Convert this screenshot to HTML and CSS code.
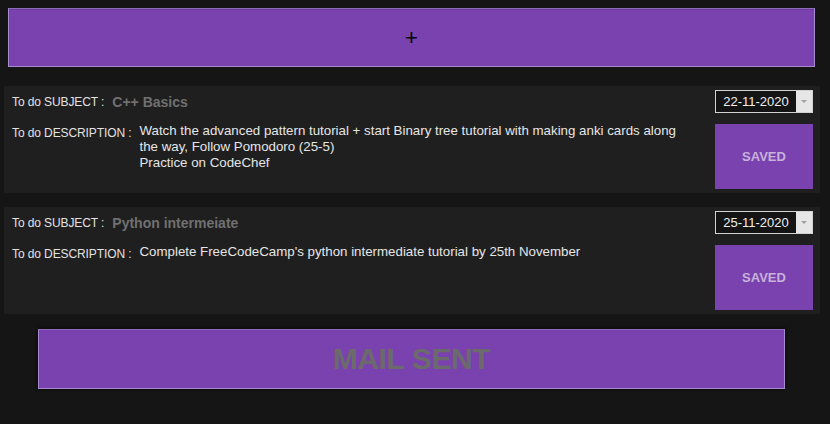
FILE: index.html
```html
<!DOCTYPE html>
<html>
<head>
<meta charset="utf-8">
<link rel="stylesheet" href="styles.css">
</head>
<body>
<main class="page">
  <button class="add-btn">+</button>

  <section class="todo">
    <div class="todo-main">
      <div class="row subject-row">
        <span class="label">To do SUBJECT :</span>
        <span class="subject">C++ Basics</span>
      </div>
      <div class="row desc-row">
        <span class="label">To do DESCRIPTION :</span>
        <p class="desc">Watch the advanced pattern tutorial + start Binary tree tutorial with making anki cards along the way, Follow Pomodoro (25-5)<br>Practice on CodeChef</p>
      </div>
    </div>
    <div class="todo-side">
      <div class="date"><span class="date-text">22-11-2020</span><span class="date-arrow"></span></div>
      <button class="saved">SAVED</button>
    </div>
  </section>

  <section class="todo">
    <div class="todo-main">
      <div class="row subject-row">
        <span class="label">To do SUBJECT :</span>
        <span class="subject">Python intermeiate</span>
      </div>
      <div class="row desc-row">
        <span class="label">To do DESCRIPTION :</span>
        <p class="desc">Complete FreeCodeCamp's python intermediate tutorial by 25th November</p>
      </div>
    </div>
    <div class="todo-side">
      <div class="date"><span class="date-text">25-11-2020</span><span class="date-arrow"></span></div>
      <button class="saved">SAVED</button>
    </div>
  </section>

  <button class="mail-btn">MAIL SENT</button>
</main>
</body>
</html>
```

FILE: styles.css
```css
html, body {
  margin: 0;
  padding: 0;
  background: #151515;
}
body {
  font-family: "Liberation Sans", Arial, sans-serif;
  width: 830px;
  height: 424px;
  overflow: hidden;
}
.page {
  display: flex;
  flex-direction: column;
  align-items: flex-start;
  padding: 8px 0 0 4px;
}
button {
  font-family: "Liberation Sans", Arial, sans-serif;
  cursor: pointer;
  padding: 0;
}
.add-btn {
  margin-left: 4px;
  width: 807px;
  height: 59px;
  background: #7a42ae;
  border: 1px solid #a68bcf;
  border-top-color: #8e6cbc;
  box-shadow: inset 0 1px 0 #6c3a9c;
  color: #000;
  font-size: 22px;
  line-height: 20px;
  font-weight: 400;
}
.todo {
  box-sizing: border-box;
  width: 816px;
  height: 107px;
  background: #1f1f1f;
  display: flex;
  justify-content: space-between;
  padding: 4px 7px 4px 8px;
}
.add-btn + .todo {
  margin-top: 19px;
}
.todo + .todo {
  margin-top: 14px;
}
.todo-main {
  display: flex;
  flex-direction: column;
  padding-top: 4px;
}
.row {
  display: flex;
  align-items: flex-start;
}
.label {
  color: #e2e2e2;
  font-size: 12px;
  white-space: nowrap;
  letter-spacing: -0.1px;
  line-height: 16px;
}
.subject-row {
  align-items: center;
  gap: 8px;
}
.subject {
  color: #707070;
  font-size: 14px;
  font-weight: 700;
  line-height: 16px;
}
.desc-row {
  margin-top: 15px;
  gap: 8px;
}
.desc {
  margin: 0;
  width: 545px;
  color: #e6e6e6;
  font-size: 13.3px;
  line-height: 16px;
  margin-top: -2px;
}
.todo-side {
  display: flex;
  flex-direction: column;
  align-items: flex-end;
  gap: 11px;
}
.date {
  box-sizing: border-box;
  width: 98px;
  height: 23px;
  display: flex;
  border: 1px solid #d2d2d2;
  background: #141414;
}
.date-text {
  flex: 1;
  color: #f0f0f0;
  font-size: 13px;
  line-height: 21px;
  text-align: center;
}
.date-arrow {
  width: 16px;
  background: #e6e6e6;
  position: relative;
}
.date-arrow::after {
  content: "";
  position: absolute;
  left: 5px;
  top: 9px;
  border-left: 3px solid transparent;
  border-right: 3px solid transparent;
  border-top: 3px solid #a0a0a0;
}
.saved {
  width: 98px;
  height: 65px;
  background: #7a42ae;
  border: none;
  color: #c8b2dc;
  font-size: 13px;
  font-weight: 700;
}
.mail-btn {
  margin-top: 15px;
  margin-left: 34px;
  width: 747px;
  height: 60px;
  background: #7a42ae;
  border: 1px solid #a68bcf;
  border-top-color: #8e6cbc;
  box-shadow: 0 0 3px #000;
  color: #6b6b6b;
  font-size: 30px;
  font-weight: 700;
  letter-spacing: -0.4px;
}
```
